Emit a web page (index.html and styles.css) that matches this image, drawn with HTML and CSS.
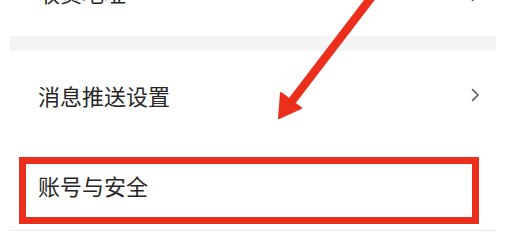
FILE: index.html
```html
<!DOCTYPE html>
<html lang="zh-CN">
<head>
<meta charset="utf-8">
<link rel="stylesheet" href="styles.css">
</head>
<body>
<div class="page">
  <div class="list">
    <div class="row row-top">
      <span class="label label-top">收货地址</span>
      <svg class="chev chev-top" width="9" height="14" viewBox="0 0 9 14"><polyline points="1.5,1.5 7,7 1.5,12.5" fill="none" stroke="#555" stroke-width="1.6" stroke-linecap="round" stroke-linejoin="round"/></svg>
    </div>
    <div class="band"></div>
    <div class="row row-mid">
      <span class="label">消息推送设置</span>
      <svg class="chev" width="9" height="14" viewBox="0 0 9 14"><polyline points="1.5,1.5 7,7 1.5,12.5" fill="none" stroke="#555" stroke-width="1.6" stroke-linecap="round" stroke-linejoin="round"/></svg>
    </div>
    <div class="row row-last">
      <span class="label">账号与安全</span>
      <svg class="chev" width="9" height="14" viewBox="0 0 9 14"><polyline points="1.5,1.5 7,7 1.5,12.5" fill="none" stroke="#555" stroke-width="1.6" stroke-linecap="round" stroke-linejoin="round"/></svg>
    </div>
  </div>
  <div class="highlight"></div>
  <svg class="arrow" width="507" height="231" viewBox="0 0 507 231">
    <line x1="374" y1="-6" x2="292" y2="101" stroke="#ec2f1c" stroke-width="8.5"/>
    <polygon points="279,118 281,93 301,108" fill="#ec2f1c" stroke="#ec2f1c" stroke-width="2" stroke-linejoin="round"/>
  </svg>
</div>
</body>
</html>
```
FILE: styles.css
```css
html, body {
  margin: 0;
  padding: 0;
  background: #ffffff;
}
.page {
  position: relative;
  width: 507px;
  height: 231px;
  overflow: hidden;
  font-family: "Noto Sans CJK SC", "Noto Sans", sans-serif;
  color: #262626;
}
.list {
  padding: 0 11px 0 10px;
}
.row {
  display: flex;
  align-items: center;
  justify-content: space-between;
  padding: 0 16px 0 28px;
  box-sizing: border-box;
}
.label {
  font-size: 22px;
  line-height: 24px;
}
.row-top {
  height: 36px;
  align-items: flex-start;
}
.label-top {
  margin-top: -20px;
}
.chev-top {
  margin-top: -12px;
}
.band {
  height: 15px;
  background: #f4f4f4;
}
.row-mid {
  height: 94px;
  padding-bottom: 6px;
}
.row-last {
  height: 86px;
  padding-bottom: 5px;
  border-bottom: 1px solid #ececec;
}
.chev {
  display: block;
}
.highlight {
  position: absolute;
  left: 19px;
  top: 157px;
  width: 460px;
  height: 67px;
  box-sizing: border-box;
  border: 7px solid #ec2f1c;
}
.arrow {
  position: absolute;
  left: 0;
  top: 0;
}
```
